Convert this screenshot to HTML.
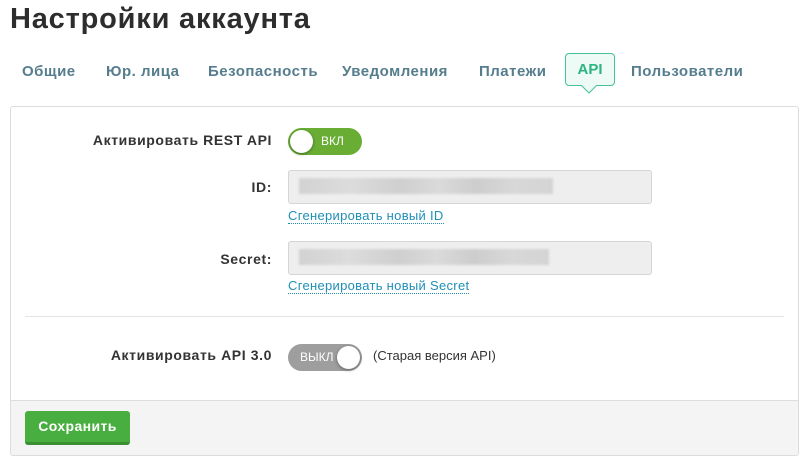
<!DOCTYPE html>
<html><head><meta charset="utf-8"><style>
*{margin:0;padding:0;box-sizing:border-box}
body{width:808px;height:462px;background:#fff;font-family:"Liberation Sans",sans-serif;color:#333;position:relative;overflow:hidden}
.a{position:absolute;white-space:nowrap}
h1{position:absolute;left:10px;top:3px;font-size:29px;font-weight:bold;color:#2d2d2d;letter-spacing:0.8px}
.tab{position:absolute;top:63px;font-size:15px;font-weight:bold;color:#557d8e;letter-spacing:0.5px}
.apitab{position:absolute;left:565px;top:53px;width:50px;height:33px;border:1px solid #45c293;border-radius:4px;background:#edfaf5;color:#2db481;font-weight:bold;font-size:15px;text-align:center;line-height:32px}
.panel{position:absolute;left:10px;top:106px;width:789px;height:350px;border:1px solid #dcdcdc;border-radius:3px;overflow:hidden}
.foot{position:absolute;left:0;top:293px;width:100%;height:57px;background:#f4f4f4;border-top:1px solid #ddd}
.lbl{position:absolute;font-size:14px;font-weight:bold;color:#333;text-align:right;width:262px;left:10px;letter-spacing:0.6px}
.inp{position:absolute;left:288px;width:364px;height:34px;background:#eeeeee;border:1px solid #d5d5d5;border-radius:3px}
.blur{position:absolute;left:10px;top:7px;height:16px;background:linear-gradient(90deg,#d2d2d2,#dcdcdc 20%,#cfcfcf 40%,#dadada 55%,#cdcdcd 70%,#d8d8d8 85%,#d4d4d4);filter:blur(1px)}
.link{position:absolute;left:288px;font-size:13px;color:#1f8fb6;border-bottom:1px dotted #1f8fb6;line-height:14px;letter-spacing:0.3px}
.tg{position:absolute;left:288px;width:74px;height:27px;border-radius:14px}
.knob{position:absolute;top:2px;width:23px;height:23px;border-radius:50%;background:#fff;box-shadow:0 1px 3px rgba(0,0,0,.4)}
</style></head><body>
<h1>Настройки аккаунта</h1>
<div class="tab" style="left:22px">Общие</div>
<div class="tab" style="left:106px">Юр. лица</div>
<div class="tab" style="left:208px">Безопасность</div>
<div class="tab" style="left:342px">Уведомления</div>
<div class="tab" style="left:479px">Платежи</div>
<div class="apitab">API</div>
<svg class="a" style="left:581px;top:85px" width="16" height="9"><path d="M0 0 L8 8 L16 0" fill="#edfaf5" stroke="#45c293"/></svg>
<div class="tab" style="left:631px">Пользователи</div>
<div class="panel"><div class="foot"></div>
<div class="a" style="left:14px;top:209px;width:759px;height:1px;background:#e4e4e4"></div>
<div class="a" style="left:14px;top:304px;width:105px;height:34px;background:#47ae3f;border-radius:3px;border-bottom:3px solid #3a8f33;color:#fff;font-weight:bold;font-size:14px;text-align:center;line-height:31px;letter-spacing:0.4px">Сохранить</div>
</div>
<div class="lbl" style="top:132px">Активировать REST API</div>
<div class="tg" style="top:128px;background:#69ad35"><div class="knob" style="left:2px"></div><span class="a" style="left:33px;top:6px;font-size:12px;color:#fff">ВКЛ</span></div>
<div class="lbl" style="top:179px">ID:</div>
<div class="inp" style="top:170px"><div class="blur" style="width:254px"></div></div>
<div class="link" style="top:209px">Сгенерировать новый ID</div>
<div class="lbl" style="top:251px">Secret:</div>
<div class="inp" style="top:241px"><div class="blur" style="width:250px"></div></div>
<div class="link" style="top:279px">Сгенерировать новый Secret</div>
<div class="lbl" style="top:347px">Активировать API 3.0</div>
<div class="tg" style="top:344px;background:#9e9e9e"><span class="a" style="left:12px;top:6px;font-size:12px;color:#fff">ВЫКЛ</span><div class="knob" style="left:49px"></div></div>
<div class="a" style="left:373px;top:348px;font-size:13px;color:#333">(Старая версия API)</div>
</body></html>
